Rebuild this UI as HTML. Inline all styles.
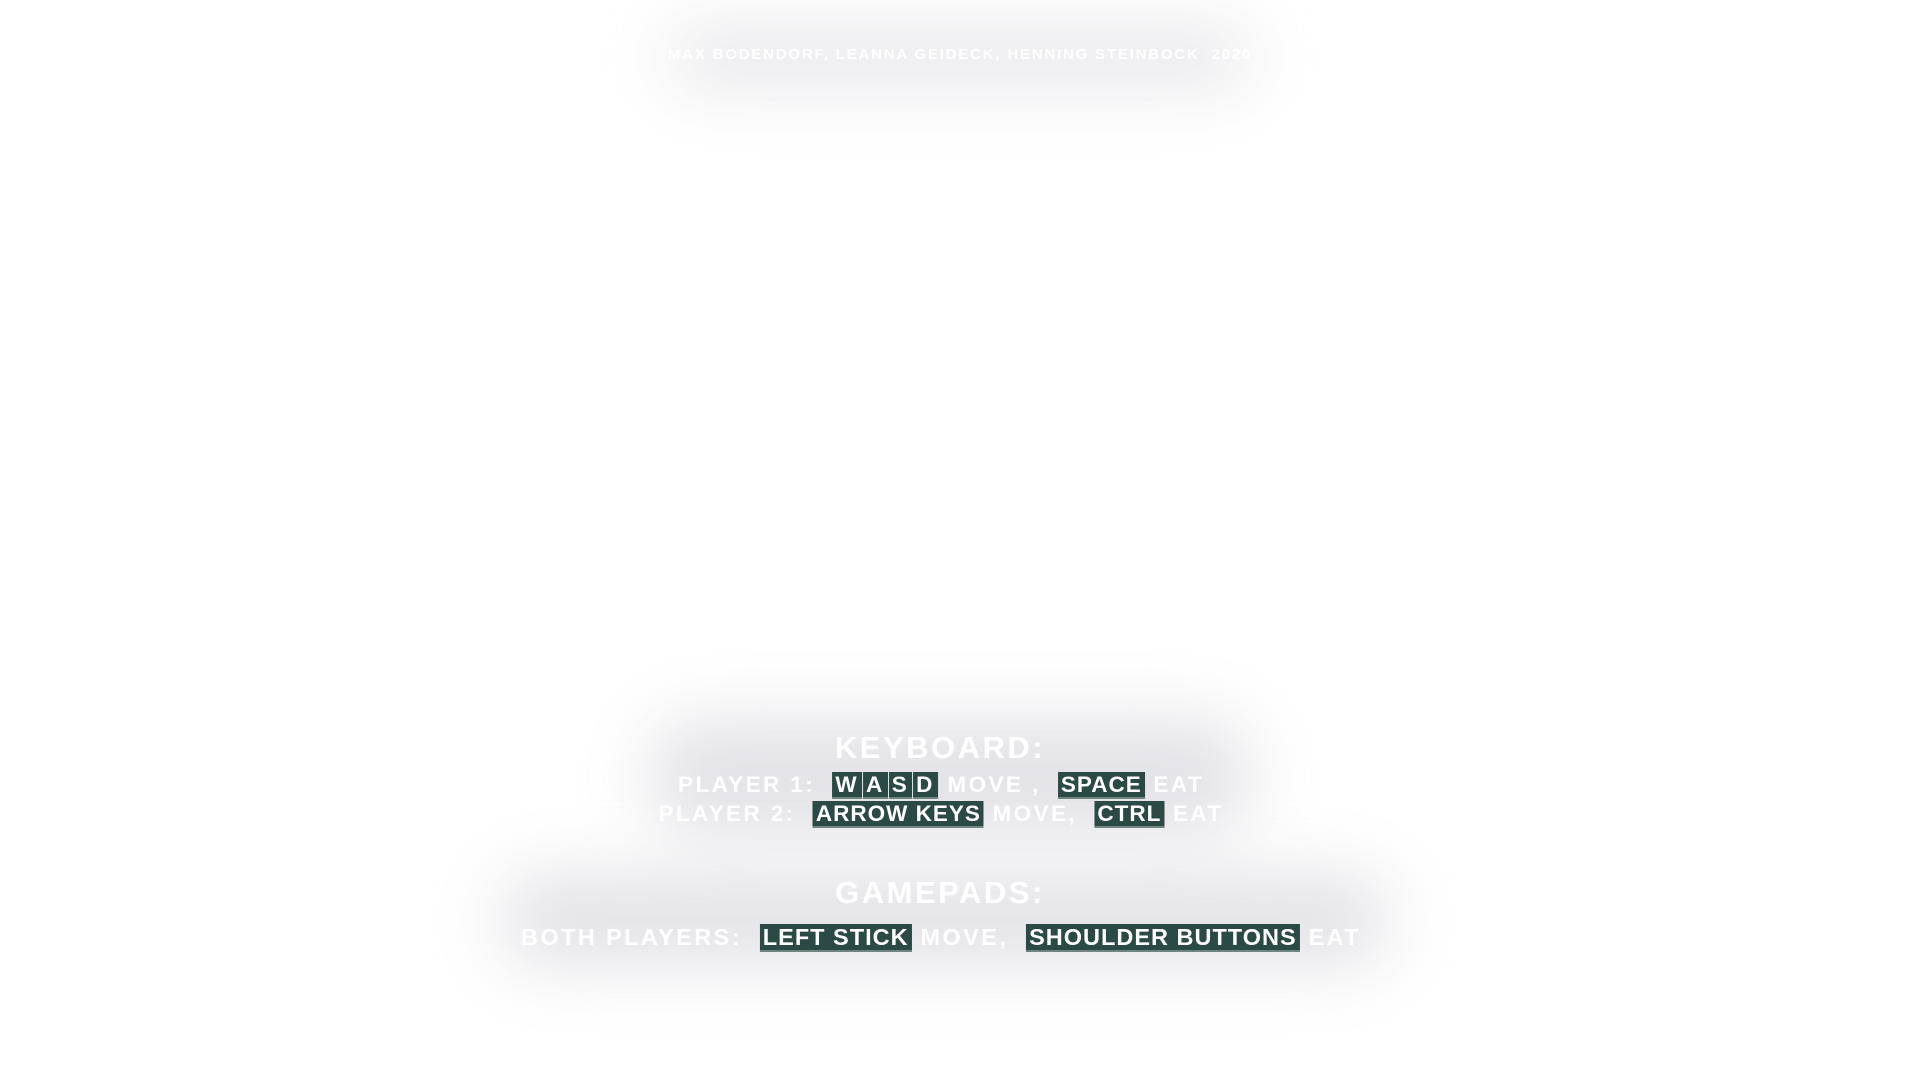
<!DOCTYPE html>
<html><head><meta charset="utf-8"><style>
body{margin:0;width:1920px;height:1080px;background:#fff;overflow:hidden;position:relative;font-family:"Liberation Sans",sans-serif;font-weight:bold;color:#fff;text-transform:uppercase}
.blob{position:absolute;background:#cfcfd6;filter:blur(34px);border-radius:50px}
.t{position:absolute;white-space:nowrap;text-align:center;transform:translateX(-50%)}
.k{background:#2b4a45;padding:0 3px;border-bottom:2px solid #6f8580;letter-spacing:1px}
.w{background:#2b4a45;padding:0 3px;border-bottom:2px solid #6f8580;margin-right:1px}
</style></head><body>
<div class="blob" style="left:670px;top:30px;width:580px;height:55px;opacity:.55"></div>
<div class="blob" style="left:650px;top:720px;width:600px;height:115px;opacity:.6"></div>
<div class="blob" style="left:500px;top:875px;width:890px;height:90px;opacity:.6"></div>
<div class="t" style="left:960px;top:46px;font-size:15px;letter-spacing:1.8px">Max Bodendorf, Leanna Geideck, Henning Steinbock &nbsp;2020</div>
<div class="t" style="left:940px;top:730px;font-size:31px;letter-spacing:2.5px">Keyboard:</div>
<div class="t" style="left:941px;top:772px;font-size:22.5px;letter-spacing:2.4px">Player 1: &nbsp;<span class="w">W</span><span class="w">A</span><span class="w">S</span><span class="w">D</span> Move , &nbsp;<span class="k">Space</span> Eat</div>
<div class="t" style="left:941px;top:801px;font-size:22.5px;letter-spacing:2.4px">Player 2: &nbsp;<span class="k">Arrow Keys</span> Move, &nbsp;<span class="k">Ctrl</span> Eat</div>
<div class="t" style="left:940px;top:875px;font-size:31px;letter-spacing:2.5px">Gamepads:</div>
<div class="t" style="left:941px;top:924px;font-size:23.5px;letter-spacing:2.4px">Both Players: &nbsp;<span class="k">Left Stick</span> Move, &nbsp;<span class="k">Shoulder Buttons</span> Eat</div>
</body></html>
